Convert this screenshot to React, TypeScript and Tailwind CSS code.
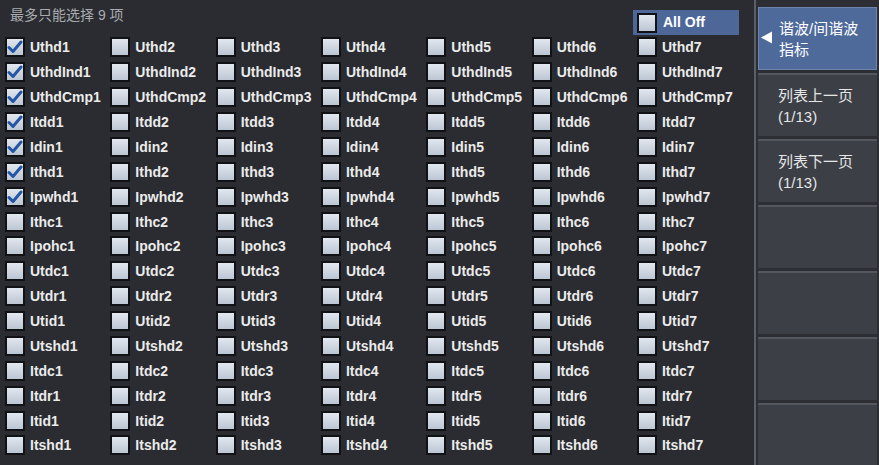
import React from "react";

const ROWS = [
  "Uthd", "UthdInd", "UthdCmp", "Itdd", "Idin", "Ithd", "Ipwhd", "Ithc", "Ipohc",
  "Utdc", "Utdr", "Utid", "Utshd", "Itdc", "Itdr", "Itid", "Itshd",
];
const CHECKED = ["Uthd1", "UthdInd1", "UthdCmp1", "Itdd1", "Idin1", "Ithd1", "Ipwhd1"];

const SIDE = [
  { lines: ["谐波/间谐波", "指标"], active: true },
  { lines: ["列表上一页", "(1/13)"] },
  { lines: ["列表下一页", "(1/13)"] },
  { lines: [] },
  { lines: [] },
  { lines: [] },
  { lines: [] },
];

function Box({ checked }: { checked?: boolean }) {
  return (
    <div className="w-[20px] h-[20px] shrink-0 border-2 border-[#101215] bg-gradient-to-b from-[#e2e7ef] to-[#bcc6d3] flex items-center justify-center">
      {checked && (
        <svg width="16" height="14" viewBox="0 0 16 14">
          <path d="M2 7.5 L6 11.5 L14 2" fill="none" stroke="#2456a6" strokeWidth="3" strokeLinecap="round" strokeLinejoin="round" />
        </svg>
      )}
    </div>
  );
}

export default function App() {
  return (
    <div className="w-[879px] h-[465px] flex bg-[#2a2c31] overflow-hidden" style={{ fontFamily: '"Liberation Sans", "Noto Sans CJK SC", sans-serif' }}>
      {/* 左侧勾选列表 */}
      <div className="w-[754px] h-full flex flex-col">
        <div className="h-[35px] flex items-start">
          <span className="ml-[10px] mt-[6px] text-[14px] leading-[18px] text-[#a9abaf]">最多只能选择 9 项</span>
          <div className="ml-auto mr-[15px] mt-[10px] w-[106px] h-[25px] bg-[#4d6898] flex items-center pl-[4px] gap-[6px]">
            <Box />
            <span className="text-[14px] font-bold text-white">All Off</span>
          </div>
        </div>
        <div className="ml-[5px] grid grid-cols-[repeat(7,105.33px)] auto-rows-[24.875px]">
          {ROWS.map((r) =>
            [1, 2, 3, 4, 5, 6, 7].map((n) => {
              const name = r + n;
              return (
                <div key={name} className="flex items-center gap-[5px]">
                  <Box checked={CHECKED.includes(name)} />
                  <span className="text-[14px] font-bold text-[#ebebeb] leading-none">{name}</span>
                </div>
              );
            })
          )}
        </div>
      </div>

      {/* 分隔线 */}
      <div className="w-[2px] h-full bg-[#5b5f67]" />

      {/* 右侧菜单 */}
      <div className="relative flex-1 h-full bg-[#2c2e34] pl-[2px] pr-[2px] pt-[7px] flex flex-col gap-[3px]">
        {SIDE.map((b, i) => (
          <div
            key={i}
            className={
              "h-[63px] shrink-0 flex flex-col justify-center pl-[20px] text-[15px] leading-[21px] " +
              (b.active
                ? "bg-[#4e6a9b] border border-[#6d84ad] text-white"
                : "bg-[#3c3f46] border-t-2 border-[#54575e] text-[#e6e6e6]")
            }
          >
            {b.lines.map((l) => (
              <span key={l}>{l}</span>
            ))}
          </div>
        ))}
        <svg className="absolute left-[4px] top-[31px]" width="13" height="13" viewBox="0 0 13 13">
          <path d="M1 6.5 L12 0.5 L12 12.5 Z" fill="#ffffff" />
        </svg>
      </div>
    </div>
  );
}
